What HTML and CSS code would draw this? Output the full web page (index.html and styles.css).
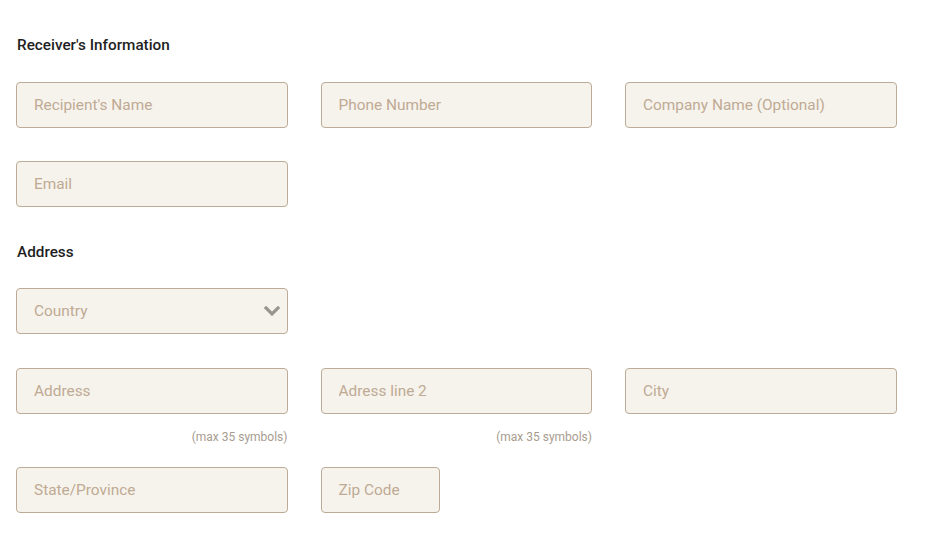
FILE: index.html
```html
<!DOCTYPE html>
<html>
<head>
<meta charset="utf-8">
<link rel="stylesheet" href="styles.css">
</head>
<body>
<div class="form">
  <h3 class="title">Receiver's Information</h3>
  <div class="grid">
    <input class="field" placeholder="Recipient's Name">
    <input class="field" placeholder="Phone Number">
    <input class="field" placeholder="Company Name (Optional)">
    <input class="field" placeholder="Email">
  </div>
  <h3 class="title title-address">Address</h3>
  <div class="grid">
    <div class="select">
      <span class="select-text">Country</span>
      <svg class="chevron" width="16" height="11" viewBox="0 0 16 11"><path d="M2 2 L8 8 L14 2" fill="none" stroke="#9a9590" stroke-width="3.2" stroke-linecap="square"/></svg>
    </div>
  </div>
  <div class="grid grid-address">
    <div class="cell"><input class="field" placeholder="Address"><div class="hint">(max 35 symbols)</div></div>
    <div class="cell"><input class="field" placeholder="Adress line 2"><div class="hint">(max 35 symbols)</div></div>
    <div class="cell"><input class="field" placeholder="City"></div>
  </div>
  <div class="grid grid-state">
    <input class="field" placeholder="State/Province">
    <input class="field field-zip" placeholder="Zip Code">
  </div>
</div>
</body>
</html>
```

FILE: styles.css
```css
* { box-sizing: border-box; }
html, body { margin: 0; padding: 0; background: #fff; }
body { font-family: Roboto, "Noto Sans", sans-serif; }
.form { padding: 35px 0 0 16px; }
.title {
  margin: 0 0 27px 1px;
  font-size: 15.3px;
  line-height: 20px;
  font-weight: 500;
  color: #1f1f1f;
}
.title-address { margin-top: 35px; margin-bottom: 26px; }
.grid {
  display: grid;
  grid-template-columns: 271.5px 271.5px 271.5px;
  column-gap: 33px;
  row-gap: 33px;
  align-items: start;
}
.field, .select {
  display: block;
  width: 271.5px;
  height: 46px;
  border: 1px solid #bcab97;
  border-radius: 4px;
  background: #f6f3ec;
  padding: 0 17px;
  font-family: Roboto, sans-serif;
  font-size: 15.4px;
  color: #333;
  outline: none;
}
.field::placeholder { color: #bfaa94; opacity: 1; }
.select {
  display: flex;
  align-items: center;
  justify-content: space-between;
  padding-right: 7px;
}
.select-text { color: #bfaa94; }
.grid-address { margin-top: 34px; }
.hint {
  margin-top: 15px;
  text-align: right;
  font-size: 12px;
  line-height: 16px;
  color: #a89c8f;
}
.grid-state { margin-top: 22px; }
.field-zip { width: 119px; }
```
